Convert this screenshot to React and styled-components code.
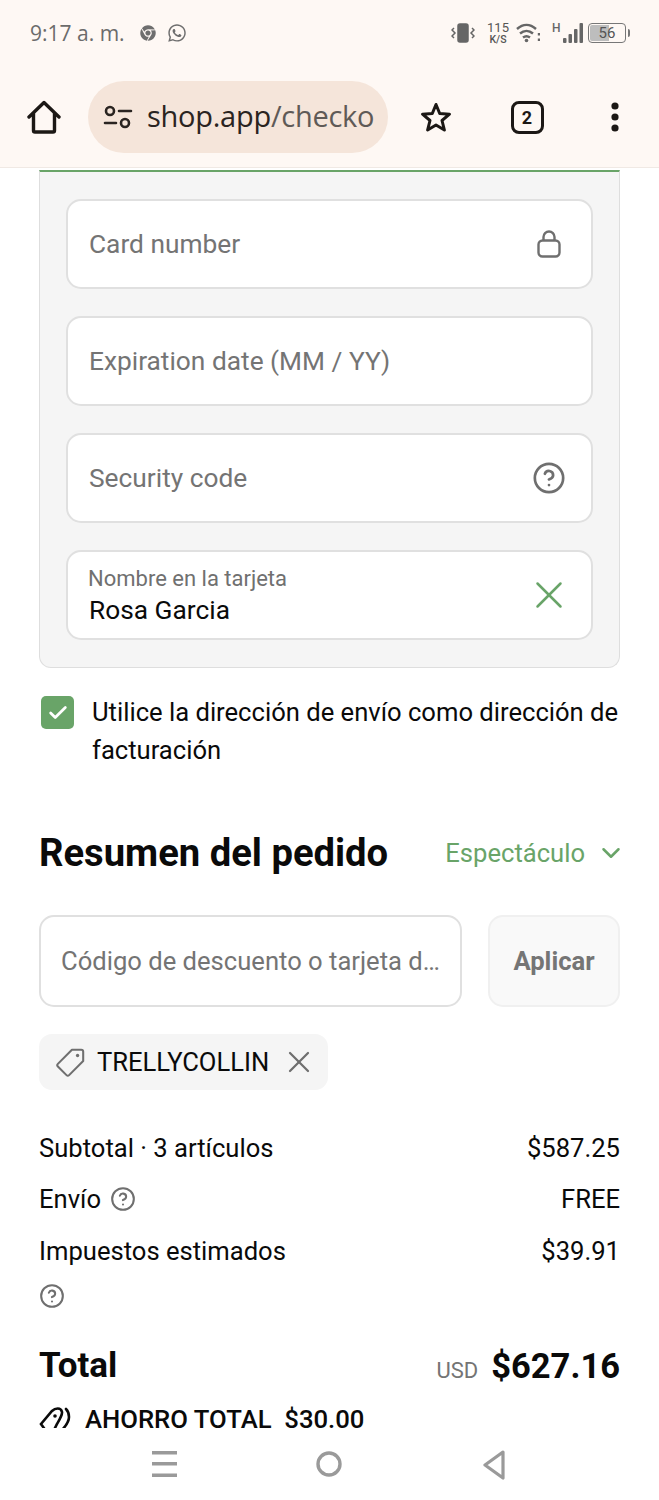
import React from 'react'
import styled, { createGlobalStyle } from 'styled-components'
import { FaChrome, FaWhatsapp } from 'react-icons/fa'
import { Check, ChevronDown, CircleHelp, X } from 'lucide-react'

const Global = createGlobalStyle`
  html, body { margin: 0; padding: 0; background: #fff; }
  body { font-family: Roboto, "Liberation Sans", sans-serif; color: #0a0a0a; }
`

const Page = styled.div`
  width: 659px;
  height: 1500px;
  display: flex;
  flex-direction: column;
  overflow: hidden;
  background: #fff;
`

const Chrome = styled.header`
  height: 168px;
  flex: none;
  background: #fef8f4;
  border-bottom: 1px solid #f0e9e4;
  box-sizing: border-box;
`

const StatusBar = styled.div`
  height: 66px;
  padding: 0 29px 0 30px;
  display: flex;
  align-items: center;
  color: #666;
`

const Time = styled.span`
  font-family: "Open Sans", Roboto, sans-serif;
  font-size: 21px;
  color: #6b6b6b;
  margin-right: 4px;
  white-space: nowrap;
`

const StatusLeft = styled.div`
  display: flex;
  align-items: center;
  gap: 11px;
  flex: 1;
`

const StatusRight = styled.div`
  display: flex;
  align-items: center;
`

const Speed = styled.div`
  display: flex;
  flex-direction: column;
  align-items: center;
  width: 20px;
  font-size: 13px;
  line-height: 12px;
  color: #555;
  margin: 0 8px 0 13px;
  small { font-size: 10.5px; line-height: 11px; font-weight: 500; }
`

const Battery = styled.div`
  width: 38px;
  height: 20px;
  box-sizing: border-box;
  border: 1.5px solid #777;
  border-radius: 4px;
  font-size: 15px;
  line-height: 17px;
  text-align: center;
  color: #555;
  margin-left: 5px;
  background: linear-gradient(90deg, #bdbdbd 0 56%, transparent 56%);
  background-clip: content-box;
  padding: 1px;
`

const BatteryCap = styled.div`
  width: 2px;
  height: 8px;
  background: #777;
  border-radius: 0 2px 2px 0;
  margin-left: 2px;
`

const Toolbar = styled.div`
  display: flex;
  align-items: center;
  height: 72px;
  margin-top: 15px;
  padding-left: 27px;
`

const UrlPill = styled.div`
  width: 300px;
  height: 72px;
  flex: none;
  margin-left: 27px;
  border-radius: 36px;
  background: #f5e5da;
  display: flex;
  align-items: center;
  padding-left: 15px;
  box-sizing: border-box;
  overflow: hidden;
`

const UrlText = styled.span`
  font-family: "Open Sans", Roboto, sans-serif;
  font-size: 29px;
  letter-spacing: -0.26px;
  color: #5f5a57;
  margin: 0 0 3px 14px;
  white-space: nowrap;
  b { font-weight: 400; color: #2a2421; }
`

const ToolSlot = styled.div`
  width: ${p => p.$w}px;
  display: flex;
  justify-content: center;
  align-items: center;
  flex: none;
`

const TabCount = styled.div`
  width: 33px;
  height: 33px;
  box-sizing: border-box;
  border: 3px solid #1c1815;
  border-radius: 8px;
  display: flex;
  align-items: center;
  justify-content: center;
  font-size: 18px;
  font-weight: 700;
  color: #1c1815;
`

const Content = styled.main`
  flex: 1;
  min-height: 0;
  overflow: hidden;
  padding: 2px 39px 0;
`

const CardPanel = styled.section`
  background: #f5f5f5;
  border: 1px solid #dedede;
  border-top: 2px solid #69a468;
  border-radius: 0 0 12px 12px;
  padding: 27px 26px 27px;
  display: flex;
  flex-direction: column;
  gap: 27px;
  box-sizing: border-box;
`

const Field = styled.div`
  height: 90px;
  box-sizing: border-box;
  background: #fff;
  border: 2px solid #e0e0e0;
  border-radius: 15px;
  padding: 0 24px 0 21px;
  display: flex;
  align-items: center;
  justify-content: space-between;
  color: #747474;
  font-size: 26.3px;
`

const FieldIcon = styled.span`
  width: 34px;
  height: 34px;
  display: flex;
  align-items: center;
  justify-content: center;
  overflow: visible;
  flex: none;
  margin-right: 1px;
  svg { flex: none; }
`

const FilledText = styled.div`
  display: flex;
  flex-direction: column;
  margin-top: 4px;
`

const FloatLabel = styled.span`
  font-size: 22px;
  line-height: 26px;
  margin-left: -1px;
  color: #707070;
`

const FilledValue = styled.span`
  font-size: 26.3px;
  line-height: 37px;
  color: #0a0a0a;
`

const CheckRow = styled.div`
  display: flex;
  align-items: flex-start;
  margin-top: 25px;
  padding-left: 2px;
`

const CheckBox = styled.div`
  width: 33px;
  height: 33px;
  flex: none;
  margin: 3px 18px 0 0;
  border-radius: 5px;
  background: #69a468;
  display: flex;
  align-items: center;
  justify-content: center;
  color: #fff;
`

const CheckText = styled.div`
  font-size: 25.6px;
  line-height: 38px;
  color: #0a0a0a;
`

const SummaryHead = styled.div`
  display: flex;
  align-items: center;
  justify-content: space-between;
  margin-top: 59px;
  height: 50px;
`

const Heading = styled.h2`
  margin: 0;
  font-size: 38.2px;
  font-weight: 700;
  color: #0a0a0a;
`

const Toggle = styled.div`
  display: flex;
  align-items: center;
  gap: 11px;
  margin-right: -6px;
  color: #69a468;
  font-size: 25.6px;
`

const DiscountRow = styled.div`
  display: flex;
  gap: 26px;
  margin-top: 37px;
`

const DiscountInput = styled.div`
  width: 423px;
  height: 92px;
  box-sizing: border-box;
  border: 2px solid #e0e0e0;
  border-radius: 15px;
  padding: 0 20px;
  display: flex;
  align-items: center;
  font-size: 25.6px;
  color: #747474;
  white-space: nowrap;
`

const ApplyButton = styled.div`
  flex: 1;
  height: 92px;
  box-sizing: border-box;
  background: #f9f9f9;
  border: 2px solid #f0f0f0;
  border-radius: 15px;
  display: flex;
  align-items: center;
  justify-content: center;
  font-size: 25.6px;
  font-weight: 700;
  color: #757575;
`

const Chip = styled.div`
  display: inline-flex;
  align-items: center;
  height: 56px;
  margin-top: 27px;
  padding: 0 10px 0 17px;
  gap: 11px;
  border-radius: 13px;
  background: #f5f5f5;
  font-size: 25.6px;
  color: #0a0a0a;
`

const ChipClose = styled.span`
  width: 38px;
  display: flex;
  justify-content: center;
  color: #6f6f6f;
`

const Rows = styled.div`
  margin-top: 32px;
`

const Row = styled.div`
  display: flex;
  justify-content: space-between;
  align-items: center;
  height: 51.5px;
  font-size: 25.6px;
  color: #0a0a0a;
`

const LabelWithIcon = styled.span`
  display: flex;
  align-items: center;
  gap: 9px;
`

const HelpLine = styled.div`
  height: 38px;
  display: flex;
  align-items: center;
  color: #6f6f6f;
`

const TotalRow = styled.div`
  display: flex;
  justify-content: space-between;
  align-items: center;
  margin-top: 26px;
  height: 50px;
`

const TotalLabel = styled.span`
  font-size: 35px;
  font-weight: 700;
`

const TotalValue = styled.span`
  display: flex;
  align-items: baseline;
  gap: 13px;
  font-size: 34.5px;
  font-weight: 700;
  small {
    font-size: 22px;
    font-weight: 400;
    color: #747474;
  }
`

const Savings = styled.div`
  display: flex;
  align-items: center;
  gap: 14px;
  margin-top: 13px;
  font-size: 25.7px;
  font-weight: 500;
  white-space: nowrap;
`

const NavBar = styled.nav`
  height: 72px;
  flex: none;
  background: #fff;
  display: grid;
  grid-template-columns: 164px 165px 165px;
  justify-content: center;
  align-items: start;
  justify-items: center;
  padding-top: 22px;
  box-sizing: border-box;
`

const HelpIcon = ({ size, color }) => <CircleHelp size={size} color={color} strokeWidth={1.9} />

const App = () => (
  <Page>
    <Global />
    <Chrome>
      <StatusBar>
        <StatusLeft>
          <Time>9:17 a. m.</Time>
          <FaChrome size={16} color="#6e6e6e" />
          <FaWhatsapp size={20} color="#6e6e6e" />
        </StatusLeft>
        <StatusRight>
          <svg width="24" height="20" viewBox="0 0 24 20" fill="none" stroke="#666" strokeWidth="1.5">
            <rect x="7" y="1" width="10" height="18" rx="2" fill="#666" />
            <path d="M3 5l-2 2 3 3-3 3 2 2M21 5l2 2-3 3 3 3-2 2" />
          </svg>
          <Speed>115<small>K/S</small></Speed>
          <svg width="24" height="20" viewBox="0 0 24 20" fill="none" stroke="#666" strokeWidth="2.4">
            <path d="M1 6c6-5.500 13-5.500 19 0M4 10.500c4-3.500 9-3.500 13 0M7 14.500c2-1.500 5-1.500 7 0" />
            <circle cx="10.500" cy="17.500" r="1.800" fill="#666" stroke="none" />
            <path d="M23 10v2.500M23 15.500v2.500" />
          </svg>
          <svg width="31" height="22" viewBox="0 0 31 22" style={{ marginLeft: 12 }}>
            <text x="0" y="10" fontSize="12" fontWeight="500" fill="#666" fontFamily="Roboto">H</text>
            <rect x="11" y="16" width="3.500" height="5" rx="1" fill="#666" />
            <rect x="16.500" y="12" width="3.500" height="9" rx="1" fill="#666" />
            <rect x="22" y="7" width="3.500" height="14" rx="1" fill="#666" />
            <rect x="27.500" y="1" width="3.500" height="20" rx="1" fill="#666" />
          </svg>
          <Battery>56</Battery>
          <BatteryCap />
        </StatusRight>
      </StatusBar>
      <Toolbar>
        <ToolSlot $w={34}>
          <svg width="34" height="34" viewBox="0 0 34 34" fill="none" stroke="#1c1815" strokeWidth="3.400" strokeLinejoin="round" strokeLinecap="round">
            <path d="M2 17 17 2.500 32 17M6.500 13v17.500a1.500 1.500 0 0 0 1.500 1.500h18a1.500 1.500 0 0 0 1.500-1.500V13" />
          </svg>
        </ToolSlot>
        <UrlPill>
          <svg width="30" height="26" viewBox="0 0 30 26" fill="none" stroke="#2a2421" strokeWidth="2.600" strokeLinecap="round">
            <circle cx="7" cy="7" r="4" />
            <path d="M16 7h12M2 19h11" />
            <circle cx="22" cy="19" r="4" />
          </svg>
          <UrlText><b>shop.app</b>/checko</UrlText>
        </UrlPill>
        <ToolSlot $w={96}>
          <svg width="32" height="32" viewBox="0 0 32 32" fill="none" stroke="#1c1815" strokeWidth="3" strokeLinejoin="round">
            <path d="M16 3.500 19.700 12.500 29.500 13.200 22 19.500 24.400 29 16 24 7.600 29 10 19.500 2.500 13.200 12.300 12.500Z" />
          </svg>
        </ToolSlot>
        <ToolSlot $w={86}><TabCount>2</TabCount></ToolSlot>
        <ToolSlot $w={89}>
          <svg width="12" height="30" viewBox="0 0 12 30" fill="#1c1815">
            <circle cx="6" cy="4" r="3.600" />
            <circle cx="6" cy="15" r="3.600" />
            <circle cx="6" cy="26" r="3.600" />
          </svg>
        </ToolSlot>
      </Toolbar>
    </Chrome>

    <Content>
      <CardPanel>
        <Field>
          Card number
          <FieldIcon>
            <svg width="26" height="28" viewBox="0 0 26 28" fill="none" stroke="#6f6f6f" strokeWidth="2.400">
              <rect x="2.500" y="10.500" width="21" height="16" rx="4" />
              <path d="M7.500 10.500V7a5.500 5.500 0 0 1 11 0v3.500" />
            </svg>
          </FieldIcon>
        </Field>
        <Field>Expiration date (MM / YY)</Field>
        <Field>
          Security code
          <FieldIcon><HelpIcon size={34} color="#6f6f6f" /></FieldIcon>
        </Field>
        <Field>
          <FilledText>
            <FloatLabel>Nombre en la tarjeta</FloatLabel>
            <FilledValue>Rosa Garcia</FilledValue>
          </FilledText>
          <FieldIcon><X size={46} color="#69a468" strokeWidth={1.300} /></FieldIcon>
        </Field>
      </CardPanel>

      <CheckRow>
        <CheckBox><Check size={22} strokeWidth={3} /></CheckBox>
        <CheckText>Utilice la dirección de envío como dirección de facturación</CheckText>
      </CheckRow>

      <SummaryHead>
        <Heading>Resumen del pedido</Heading>
        <Toggle>Espectáculo <ChevronDown size={30} strokeWidth={2} /></Toggle>
      </SummaryHead>

      <DiscountRow>
        <DiscountInput>Código de descuento o tarjeta d…</DiscountInput>
        <ApplyButton>Aplicar</ApplyButton>
      </DiscountRow>

      <Chip>
        <svg width="30" height="30" viewBox="0 0 32 32" fill="none" stroke="#6f6f6f" strokeWidth="2.200" strokeLinejoin="round">
          <path d="M17 3h10a2 2 0 0 1 2 2v10L14 30a2 2 0 0 1-2.800 0L2 20.800A2 2 0 0 1 2 18Z" />
          <circle cx="23" cy="9" r="1.800" fill="#6f6f6f" stroke="none" />
        </svg>
        TRELLYCOLLIN
        <ChipClose><X size={36} strokeWidth={1.500} /></ChipClose>
      </Chip>

      <Rows>
        <Row><span>Subtotal · 3 artículos</span><span>$587.25</span></Row>
        <Row>
          <LabelWithIcon>Envío <HelpIcon size={26} color="#6f6f6f" /></LabelWithIcon>
          <span>FREE</span>
        </Row>
        <Row><span>Impuestos estimados</span><span>$39.91</span></Row>
        <HelpLine><HelpIcon size={26} color="#6f6f6f" /></HelpLine>
      </Rows>

      <TotalRow>
        <TotalLabel>Total</TotalLabel>
        <TotalValue><small>USD</small>$627.16</TotalValue>
      </TotalRow>

      <Savings>
        <svg width="32" height="28" viewBox="0 0 32 28" fill="none" stroke="#0a0a0a" strokeWidth="2.600" strokeLinecap="round">
          <path d="M7 26 2 19 13 6c3-3 9-4 10 1 .5 3-2 7-5 12l-3 6" />
          <path d="M22 26c4-4 8-9 8-14 0-3-1-6-3-8" />
          <circle cx="16" cy="11" r="1.800" fill="#0a0a0a" stroke="none" />
        </svg>
        AHORRO TOTAL&nbsp; $30.00
      </Savings>
    </Content>

    <NavBar>
      <svg width="26" height="28" viewBox="0 0 26 28" fill="#9a9a9a">
        <rect x="0" y="1" width="25" height="3.500" />
        <rect x="0" y="12" width="25" height="3.500" />
        <rect x="0" y="23.500" width="25" height="3.500" />
      </svg>
      <svg width="28" height="28" viewBox="0 0 28 28" fill="none" stroke="#9a9a9a" strokeWidth="3.400">
        <circle cx="14" cy="14" r="11" />
      </svg>
      <svg width="24" height="30" viewBox="0 0 24 30" fill="none" stroke="#9a9a9a" strokeWidth="3.200" strokeLinejoin="round">
        <path d="M21 2 3 15l18 13Z" />
      </svg>
    </NavBar>
  </Page>
)

export default App
